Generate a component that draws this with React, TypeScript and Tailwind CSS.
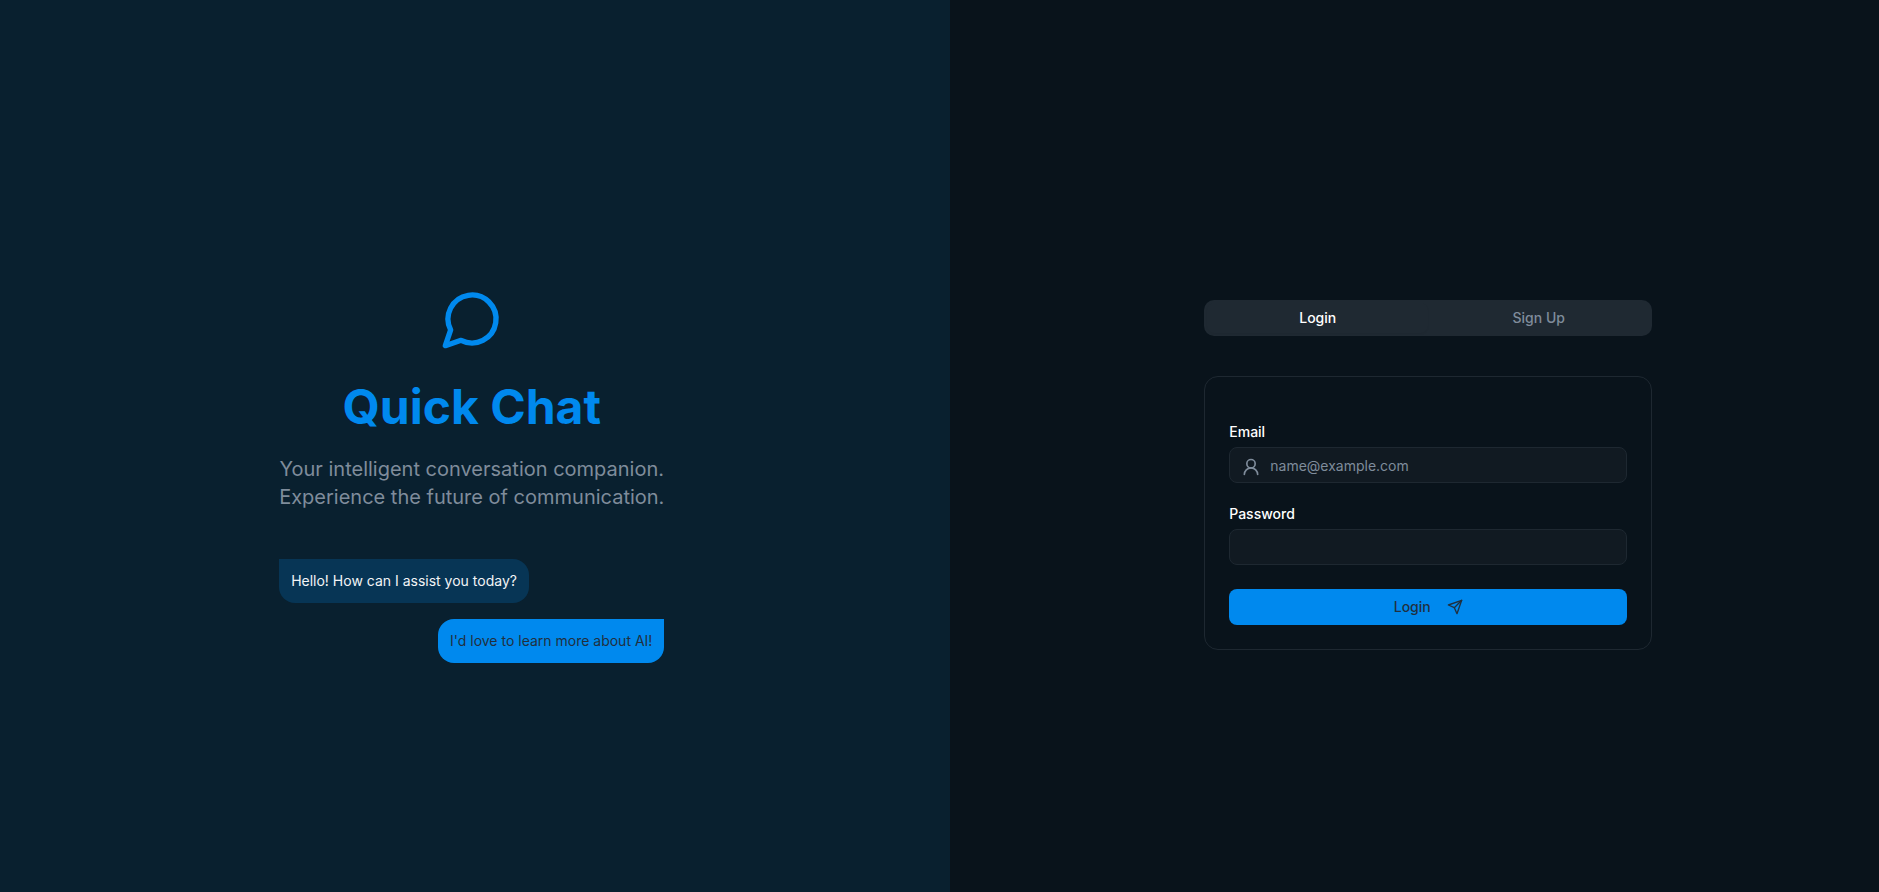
import { useState } from 'react';
import type { FormEvent } from 'react';
import { UserRound } from 'lucide-react';
import clsx from 'clsx';

type Mode = 'login' | 'signup';

const tabs: { id: Mode; label: string }[] = [
  { id: 'login', label: 'Login' },
  { id: 'signup', label: 'Sign Up' },
];

const inputClass =
  'block h-9 w-full rounded-lg border border-[#1e2831] bg-[#111a22] text-sm text-white placeholder:text-[#7f8c9b] focus:outline-none focus:border-[#0089ee]';

function ChatIcon({ className }: { className?: string }) {
  return (
    <svg
      viewBox="0 0 24 24"
      fill="none"
      stroke="currentColor"
      strokeWidth={2}
      strokeLinecap="round"
      strokeLinejoin="round"
      aria-hidden="true"
      className={className}
    >
      <path d="M7.9 20A9 9 0 1 0 4 16.1L2 22Z" />
    </svg>
  );
}

function SendIcon({ className }: { className?: string }) {
  return (
    <svg
      viewBox="0 0 24 24"
      fill="none"
      stroke="currentColor"
      strokeWidth={2}
      strokeLinecap="round"
      strokeLinejoin="round"
      aria-hidden="true"
      className={className}
    >
      <path d="m22 2-7 20-4-9-9-4Z" />
      <path d="M22 2 11 13" />
    </svg>
  );
}

function Hero() {
  return (
    <section className="flex w-[calc(50%+10px)] items-center justify-center bg-[#09202f] pt-[58px] pr-1.5">
      <div className="flex flex-col">
        <ChatIcon className="mx-auto mb-8 size-16 text-[#0089ee]" />
        <h1 className="mb-6 text-center text-5xl leading-none font-bold text-[#0089ee]">Quick Chat</h1>
        <p className="mb-12 text-center text-xl leading-7 text-[#7f8c9b]">
          Your intelligent conversation companion.
          <br />
          Experience the future of communication.
        </p>
        <div className="flex flex-col gap-4">
          <p className="self-start rounded-2xl rounded-tl-none bg-[#073555] p-3 text-sm text-[#f2f4f6]">
            Hello! How can I assist you today?
          </p>
          <p className="self-end rounded-2xl rounded-tr-none bg-[#0089ee] p-3 text-sm text-[#20303e]">
            I'd love to learn more about AI!
          </p>
        </div>
      </div>
    </section>
  );
}

export default function App() {
  const [mode, setMode] = useState<Mode>('login');
  const [email, setEmail] = useState('');
  const [password, setPassword] = useState('');

  function handleSubmit(e: FormEvent) {
    e.preventDefault();
  }

  const action = mode === 'login' ? 'Login' : 'Sign Up';

  return (
    <main className="flex min-h-screen bg-[#09131b] font-[Inter,sans-serif]">
      <Hero />

      <section className="flex flex-1 items-center justify-center pt-[58px] pl-7">
        <div className="w-full max-w-md">
          <div role="tablist" className="mb-10 grid h-9 grid-cols-2 rounded-[10px] bg-[#1f2932] p-[3px]">
            {tabs.map(tab => (
              <button
                key={tab.id}
                type="button"
                role="tab"
                aria-selected={mode === tab.id}
                onClick={() => setMode(tab.id)}
                className={clsx(
                  'rounded-lg text-sm font-medium',
                  mode === tab.id ? 'text-white shadow-xs' : 'text-[#7f8c9b]'
                )}
              >
                {tab.label}
              </button>
            ))}
          </div>

          {/* Credentials card */}
          <form onSubmit={handleSubmit} className="space-y-6 rounded-[14px] border border-[#1e2831] px-6 pt-12 pb-6">
            <div>
              <label htmlFor="email" className="mb-2 block text-sm leading-none font-medium text-white">Email</label>
              <div className="relative">
                <UserRound className="absolute top-2.5 left-3 size-5 text-[#7f8c9b]" />
                <input
                  id="email"
                  type="email"
                  value={email}
                  onChange={e => setEmail(e.target.value)}
                  placeholder="name@example.com"
                  className={clsx(inputClass, 'pr-3 pl-10')}
                />
              </div>
            </div>

            <div>
              <label htmlFor="password" className="mb-2 block text-sm leading-none font-medium text-white">Password</label>
              <input
                id="password"
                type="password"
                value={password}
                onChange={e => setPassword(e.target.value)}
                className={clsx(inputClass, 'px-3')}
              />
            </div>

            <button
              type="submit"
              className="flex h-9 w-full items-center justify-center gap-4 rounded-lg bg-[#0089ee] text-sm font-medium text-[#20303e]"
            >
              {action} <SendIcon className="size-4" />
            </button>
          </form>
        </div>
      </section>
    </main>
  );
}
